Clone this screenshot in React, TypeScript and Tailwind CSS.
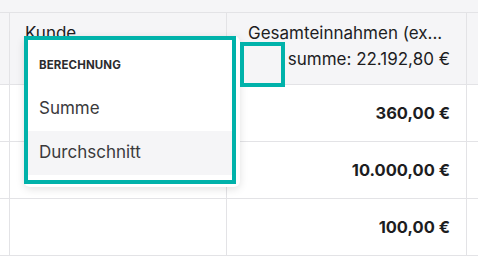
import React from "react";

const rows = ["360,00 €", "10.000,00 €", "100,00 €"];

export default function App() {
  return (
    <div
      className="relative w-[478px] h-[259px] overflow-hidden bg-white text-[#1d1d1f]"
      style={{ fontFamily: "Inter, 'Noto Sans', sans-serif" }}
    >
      <div className="h-[13px] bg-[#f5f5f7] border-b border-[#e3e3e6]" />
      <div className="flex h-[72px] bg-[#f5f5f7] border-b border-[#e3e3e6]">
        <div className="w-[10px] border-r border-[#e3e3e6]" />
        <div className="w-[217px] border-r border-[#e3e3e6] pl-[15px] pt-[8px] text-[17px] leading-[24px]">
          Kunde
        </div>
        <div className="w-[240px] border-r border-[#e3e3e6] pl-[21px] pr-[16px] pt-[8px] text-[17px] leading-[24px] flex flex-col gap-[2px]">
          <div className="whitespace-nowrap">Gesamteinnahmen (ex...</div>
          <div className="text-right whitespace-nowrap">summe: 22.192,80 €</div>
        </div>
        <div className="flex-1" />
      </div>
      {rows.map((v) => (
        <div key={v} className="flex h-[57px] border-b border-[#e3e3e6]">
          <div className="w-[10px] border-r border-[#e3e3e6]" />
          <div className="w-[217px] border-r border-[#e3e3e6]" />
          <div className="w-[240px] border-r border-[#e3e3e6] pr-[16px] flex items-center justify-end text-[16.5px] font-bold">
            {v}
          </div>
          <div className="flex-1" />
        </div>
      ))}

      {/* dropdown */}
      <div className="absolute left-[24px] top-[36px] w-[216px] h-[151px] bg-white rounded-md shadow-[0_2px_8px_rgba(0,0,0,0.12)] flex flex-col pt-[10px] pl-[4px] pr-[4px] text-[#3a3a3c]">
        <div className="h-[40px] flex items-center pl-[11px] text-[11.5px] font-bold tracking-[0.01em] text-[#2c2c2e]">
          BERECHNUNG
        </div>
        <div className="h-[45px] flex items-center pl-[11px] text-[17px]">Summe</div>
        <div className="h-[44px] flex items-center pl-[11px] text-[17px] bg-[#f5f5f7]">Durchschnitt</div>
      </div>
      <div className="absolute left-[24px] top-[36px] w-[212px] h-[148px] border-4 border-[#00b2aa]" />

      {/* small highlight square */}
      <div className="absolute left-[240px] top-[42px] w-[45px] h-[45px] border-4 border-[#00b2aa] bg-[#f5f5f7]" />
    </div>
  );
}
